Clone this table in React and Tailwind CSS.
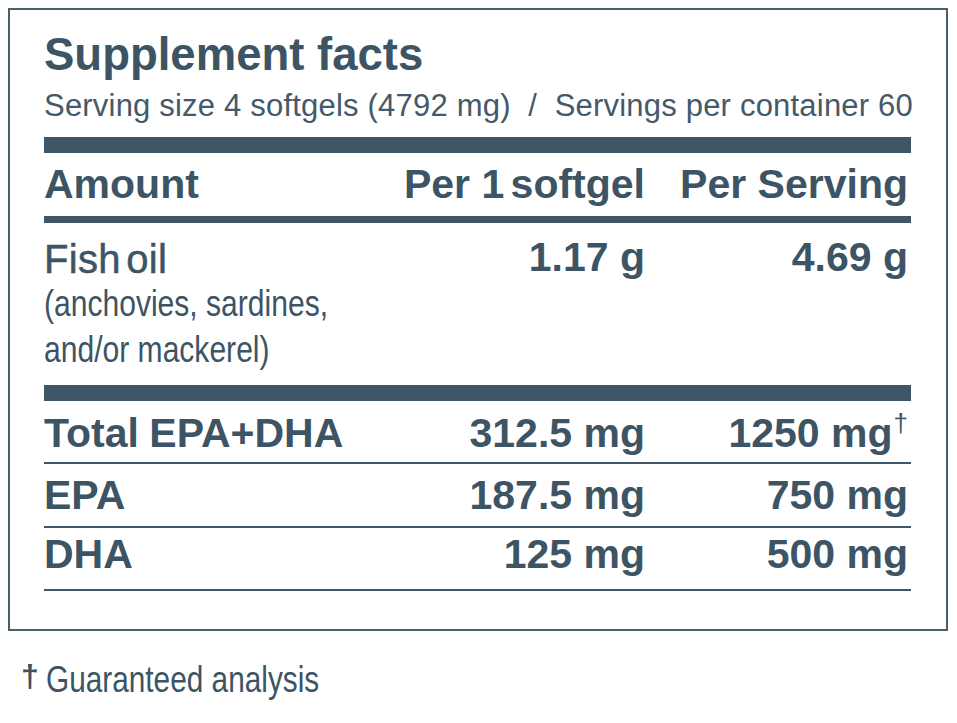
import React from 'react'

const rows = [
  { name: 'Total EPA+DHA', per: '312.5 mg', serving: '1250 mg', dagger: true, pad: 'pt-[12px] pb-[8px]' },
  { name: 'EPA', per: '187.5 mg', serving: '750 mg', pad: 'pt-[11px] pb-[10px]' },
  { name: 'DHA', per: '125 mg', serving: '500 mg', pad: 'pt-[6px] pb-[14px]' },
]

const sans = "font-['Liberation_Sans',Arial,sans-serif]"

export default function App() {
  return (
    <div className={`min-h-screen bg-white text-[#3d5464] ${sans}`}>
      <div className="ml-[8px] pt-[8px]">
        <section className="w-[940px] h-[623px] border-2 border-[#4b5f6b] pl-[34px] pr-[35px] pt-[22px]">
          <h1 className="text-[45.5px] leading-none font-bold">Supplement facts</h1>
          <p className="mt-[12px] text-[31px] leading-none whitespace-pre tracking-[0.2px] text-[#44596a]">
            {'Serving size 4 softgels (4792 mg)  /  Servings per container 60'}
          </p>

          <div className="mt-[16px] h-[16px] bg-[#3f5667]" />

          <div className="mt-[11px] grid grid-cols-[1fr_250px_266px] text-[41px] leading-none font-bold">
            <div>Amount</div>
            <div className="text-right whitespace-nowrap">
              Per 1<span className="[word-spacing:-5px]"> softgel</span>
            </div>
            <div className="text-right whitespace-nowrap pr-[3px]">Per Serving</div>
          </div>

          <div className="mt-[11px] h-[7px] bg-[#3f5667]" />

          <div className="mt-[14px] grid grid-cols-[1fr_250px_266px] items-start">
            <div className="pt-[2px]">
              <div className="text-[40px] leading-none [word-spacing:-6px] tracking-[0.3px] [-webkit-text-stroke:0.5px_#3d5464]">
                Fish oil
              </div>
              <div className="mt-[2px] text-[36px] leading-[46px] whitespace-nowrap">
                <div className="origin-left scale-x-[0.835]">(anchovies, sardines,</div>
                <div className="origin-left scale-x-[0.835]">and/or mackerel)</div>
              </div>
            </div>
            <div className="text-right text-[41px] leading-none font-bold whitespace-nowrap">1.17 g</div>
            <div className="text-right text-[41px] leading-none font-bold whitespace-nowrap pr-[3px]">4.69 g</div>
          </div>

          <div className="mt-[12px] h-[16px] bg-[#3f5667]" />

          {rows.map((r) => (
            <div
              key={r.name}
              className={`grid grid-cols-[1fr_250px_266px] border-b-2 border-[#3f5667] text-[41px] leading-none font-bold ${r.pad}`}
            >
              <div className="whitespace-nowrap [word-spacing:-1px]">{r.name}</div>
              <div className="text-right whitespace-nowrap">{r.per}</div>
              <div className="text-right whitespace-nowrap pr-[3px]">
                {r.serving}
                {r.dagger && (
                  <span className="relative -top-[15px] ml-[1px] text-[26px] font-normal">†</span>
                )}
              </div>
            </div>
          ))}
        </section>

        <div className="mt-[30px] flex items-start whitespace-nowrap">
          <span className="ml-[13px] -mt-[1px] text-[32px] leading-none font-bold">†</span>
          <span className="ml-[7px] text-[37px] leading-none origin-left scale-x-[0.805]">Guaranteed analysis</span>
        </div>
      </div>
    </div>
  )
}
